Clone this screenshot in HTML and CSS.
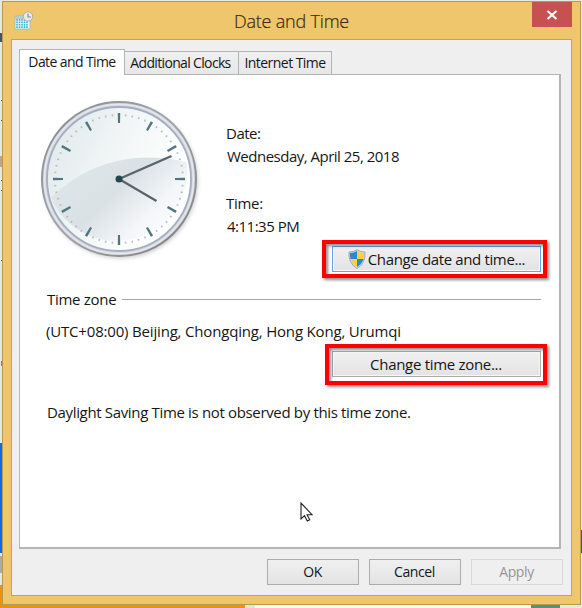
FILE: index.html
```html
<!DOCTYPE html>
<html lang="en">
<head>
<meta charset="utf-8">
<title>Date and Time</title>
<link rel="stylesheet" href="styles.css">
</head>
<body>
<div class="window">
  <header class="titlebar">
    <svg class="app-icon" width="20" height="20" viewBox="0 0 20 20">
      <path d="M1 5h15v13H1z" fill="#e9f6fa" stroke="#9fb7be" stroke-width=".8"/>
      <path d="M1 5h15v3H1z" fill="#b4cbd2"/>
      <path d="M3 8v9M5.500 8v9M8 8v9M10.500 8v9M13 8v9" stroke="#31b4d8" stroke-width="1.500" stroke-dasharray="1.700 .7"/>
      <circle cx="14" cy="5.500" r="4.700" fill="#e8e9e8" stroke="#aeb0ae"/>
      <path d="M14 2.500v3.500h3" fill="none" stroke="#7e878a" stroke-width="1.100"/>
    </svg>
    <h1 class="title">Date and Time</h1>
    <button class="close" aria-label="Close">
      <svg width="12" height="10" viewBox="0 0 12 10"><path d="M1.500 1l9 8M10.500 1l-9 8" stroke="#fff" stroke-width="2.100"/></svg>
    </button>
  </header>
  <div class="client">
    <nav class="tabs">
      <span class="tab active">Date and Time</span>
      <span class="tab additional">Additional Clocks</span>
      <span class="tab internet">Internet Time</span>
    </nav>
    <main class="panel">
      <section class="now">
        <svg class="clock" width="168" height="168" viewBox="0.500 0.500 168 168">
          <defs>
            <linearGradient id="rim" x1="0" y1="0" x2="1" y2="1">
              <stop offset="0" stop-color="#858a90"/><stop offset=".5" stop-color="#a3a6ad"/><stop offset="1" stop-color="#777a7e"/>
            </linearGradient>
            <linearGradient id="face" x1="0" y1=".2" x2=".8" y2=".6">
              <stop offset="0" stop-color="#dfe9ec"/><stop offset=".5" stop-color="#f1f5f5"/><stop offset="1" stop-color="#ffffff"/>
            </linearGradient>
            <linearGradient id="glass" x1=".1" y1=".3" x2=".9" y2=".8">
              <stop offset="0" stop-color="#dce6e7"/><stop offset=".4" stop-color="#dae1e5"/><stop offset=".75" stop-color="#f3f5f8"/><stop offset="1" stop-color="#fcfcfe"/>
            </linearGradient>
            <filter id="soft" x="-20%" y="-20%" width="140%" height="140%"><feGaussianBlur stdDeviation="2"/></filter>
          </defs>
          <circle cx="85" cy="85.500" r="77" fill="#999" opacity=".55" filter="url(#soft)"/>
          <circle cx="83.500" cy="83.500" r="77" fill="#d3d6dc" stroke="url(#rim)" stroke-width="2"/>
          <circle cx="83.500" cy="83.500" r="74.500" fill="none" stroke="#e6e7ea" stroke-width="1.500"/>
          <circle cx="83.500" cy="83.500" r="72" fill="url(#face)" stroke="#a4aec3" stroke-width="1.800"/>
          <path d="M15.500 102C40 78 74 62 112 62Q135 62 151.500 67A71 71 0 0 1 15.500 102Z" fill="url(#glass)"/>
          <circle cx="83.500" cy="83.500" r="64" fill="none" stroke="#b5bec3" stroke-width="2" pathLength="360" stroke-dasharray="1.400 4.600" stroke-dashoffset=".7"/>
          <circle cx="83.500" cy="83.500" r="61" fill="none" stroke="#507780" stroke-width="10" pathLength="360" stroke-dasharray="2.200 27.800" stroke-dashoffset="1.100"/>
          <path d="M83.500 83.500L136 60.500M83.500 83.500L121 105.500" stroke="#59636a" stroke-width="2.200"/>
          <circle cx="83.500" cy="83.500" r="3.500" fill="#24474f"/>
        </svg>
        <dl class="facts">
          <dt><span class="t-date">Date:</span></dt>
          <dd><span class="t-day">Wednesday, April 25, 2018</span></dd>
          <dt><span class="t-time">Time:</span></dt>
          <dd><span class="t-clock">4:11:35 PM</span></dd>
        </dl>
      </section>
      <div class="action first">
        <button class="btn wide focused">
          <svg class="shield" width="18" height="20" viewBox="0 0 18 20">
            <clipPath id="s"><path d="M9 2Q12 4 16 4Q17 13 9 18Q1 13 2 4Q6 4 9 2Z"/></clipPath>
            <path d="M9 .7Q12 3 17 3Q18 14 9 19.500Q0 14 1 3Q6 3 9 .7Z" fill="#d7dde0" stroke="#929b9e" stroke-width=".8"/>
            <g clip-path="url(#s)"><path d="M0 0h9v10H0zM9 10h9v10H9z" fill="#258bd2"/><path d="M9 0h9v10H9zM0 10h9v10H0z" fill="#fbd43c"/></g>
          </svg><span class="t-cdt">Change date and time...</span>
        </button>
        <i class="mark"></i>
      </div>
      <h2 class="group"><span class="t-tz">Time zone</span></h2>
      <p class="zone"><span class="t-zone">(UTC+08:00) Beijing, Chongqing, Hong Kong, Urumqi</span></p>
      <div class="action second">
        <button class="btn wide"><span class="t-ctz">Change time zone...</span></button>
        <i class="mark"></i>
      </div>
      <p class="dst"><span class="t-dst">Daylight Saving Time is not observed by this time zone.</span></p>
    </main>
    <footer class="buttons">
      <button class="btn"><span class="t-ok">OK</span></button>
      <button class="btn"><span class="t-cancel">Cancel</span></button>
      <button class="btn disabled"><span class="t-apply">Apply</span></button>
    </footer>
  </div>
</div>
<svg class="cursor" width="14" height="21" viewBox="0 0 14 21"><path d="M1 1v16l3.500-3.300 2.800 5.300 2.400-1.200-2.600-5.100H12Z" fill="#fff" stroke="#222" stroke-width="1.100"/></svg>
</body>
</html>
```
FILE: styles.css
```css
* { box-sizing: border-box; }
body {
  margin: 0; width: 582px; height: 608px; padding: 1px 1px 3px 2px; overflow: hidden; position: relative;
  font: 15px/20px "Open Sans", "Noto Sans", sans-serif; color: #161616;
  background:
    linear-gradient(#ee900c, #ee900c) 0 585px / 245px 23px no-repeat,
    linear-gradient(#e2e2e2, #e2e2e2) 245px 604px / 10px 4px no-repeat,
    linear-gradient(#f8f8f8, #f8f8f8) 255px 604px / 276px 4px no-repeat,
    linear-gradient(#4d928f, #4d928f) 531px 604px / 29px 4px no-repeat,
    linear-gradient(#0d6be4, #0d6be4) 0 443px / 3px 110px no-repeat,
    linear-gradient(#aaa, #aaa) 0 556px / 3px 17px no-repeat,
    linear-gradient(#1269b8, #1269b8) 580px 530px / 2px 23px no-repeat,
    linear-gradient(#40536a, #40536a) 0 33px / 3px 9px no-repeat,
    linear-gradient(#c7a27f, #c7a27f) 0 156px / 3px 11px no-repeat,
    linear-gradient(#9a4a35, #9a4a35) 1px 100px / 1px 1px no-repeat,
    linear-gradient(#9a4a35, #9a4a35) 1px 120px / 1px 1px no-repeat,
    linear-gradient(#9a4a35, #9a4a35) 1px 180px / 1px 1px no-repeat,
    linear-gradient(#9a4a35, #9a4a35) 1px 190px / 1px 1px no-repeat,
    linear-gradient(#9a4a35, #9a4a35) 1px 260px / 1px 1px no-repeat,
    linear-gradient(#b06a50, #b06a50) 1px 361px / 1px 5px no-repeat,
    #e8e8e2;
}
.window { height: 604px; border: 1px solid #b99950; background: #efc66b; padding: 0 8px 8px; display: flex; flex-direction: column; }
.titlebar { height: 37px; display: grid; grid-template-columns: 40px 1fr 40px; align-items: start; flex: none; }
.app-icon { margin: 9px 0 0 3px; }
.title { margin: 7px 0 0; text-align: center; font: 300 18px/24px "Open Sans", sans-serif; letter-spacing: -.2px; color: #382b12; -webkit-text-stroke: .2px #382b12; }
.close { width: 40px; height: 25px; border: 0; padding: 0; background: #c75050; display: grid; place-items: center; }
.client { flex: 1; border: 1px solid #c4a45c; background: #efefef; padding: 9px 10px 9px 7px; display: flex; flex-direction: column; }
.tabs { height: 26px; display: flex; align-items: flex-end; margin-bottom: -1px; position: relative; flex: none; font-size: 14px; }
.tab { height: 24px; display: flex; align-items: center; justify-content: center; border: 1px solid #b4b4b4; background: linear-gradient(#f0f0f0, #e7e7e7); white-space: nowrap; }
.tab.active { width: 106px; height: 26px; background: #fff; border-bottom: 0; padding-bottom: 2px; }
.additional { width: 114px; border-left: 0; letter-spacing: -.66px; padding-right: 2px; }
.internet { width: 93px; border-left: 0; letter-spacing: -.55px; }
.active { letter-spacing: -.6px; }
.panel { height: 475px; flex: none; border: 1px solid #b4b4b4; border-right-width: 2px; border-bottom-width: 2px; background: #fff; padding: 21px 18px 0 16px; }
.now { display: flex; height: 150px; }
.clock { flex: none; margin-right: 22px; }
.facts { margin: 26px 0 0; }
.facts dt, .facts dd { margin: 0; height: 23px; line-height: 22px; white-space: nowrap; }
.facts dd { margin-bottom: 24px; padding-left: 1px; }
span { white-space: nowrap; }
.action { position: relative; width: 209px; margin-left: auto; height: 26px; }
.btn { width: 92px; height: 26px; border: 1px solid #acacac; background: linear-gradient(#f0f0f0, #e3e3e3); padding: 0; font: inherit; color: inherit; display: flex; align-items: center; justify-content: center; }
.btn.wide { width: 209px; box-shadow: inset 0 0 0 1px #f7f7f7; }
.btn.focused { border-color: #67a4e4; }
.shield { margin-right: 2px; }
.mark { position: absolute; border: 4px solid #f00; filter: drop-shadow(2px 2px 1.5px #0007); }
.first .mark { inset: -6px -6px -6px -10px; }
.second .mark { inset: -7px -6px -8px -7px; }
.group { display: flex; align-items: center; margin: 17px 0 0 11px; height: 20px; font-size: 15px; font-weight: 400; gap: 6px; }
.group::after { content: ""; height: 1px; background: #a5a5a5; flex: 1; }
.zone, .dst { margin: 12px 0 10px 10px; height: 20px; }
.dst { margin: 25px 0 0 11px; }
.buttons { display: flex; justify-content: flex-end; gap: 10px; margin: 10px -2px 0 0; font-size: 14px; }
.disabled { color: #969696; border-color: #d7d7d7; background: #efefef; }
.t-day, .t-clock { letter-spacing: -.5px; }
.t-date { letter-spacing: -.5px; }
.t-time, .t-tz { letter-spacing: -.28px; }
.t-cdt { letter-spacing: -.36px; }
.t-ctz { letter-spacing: -.3px; margin-right: 1px; }
.t-zone { letter-spacing: -.18px; }
.t-dst { letter-spacing: -.34px; }
.t-ok, .t-cancel, .t-apply { letter-spacing: -.4px; margin-right: 1px; }
.cursor { position: absolute; left: 300px; top: 502px; }
```
